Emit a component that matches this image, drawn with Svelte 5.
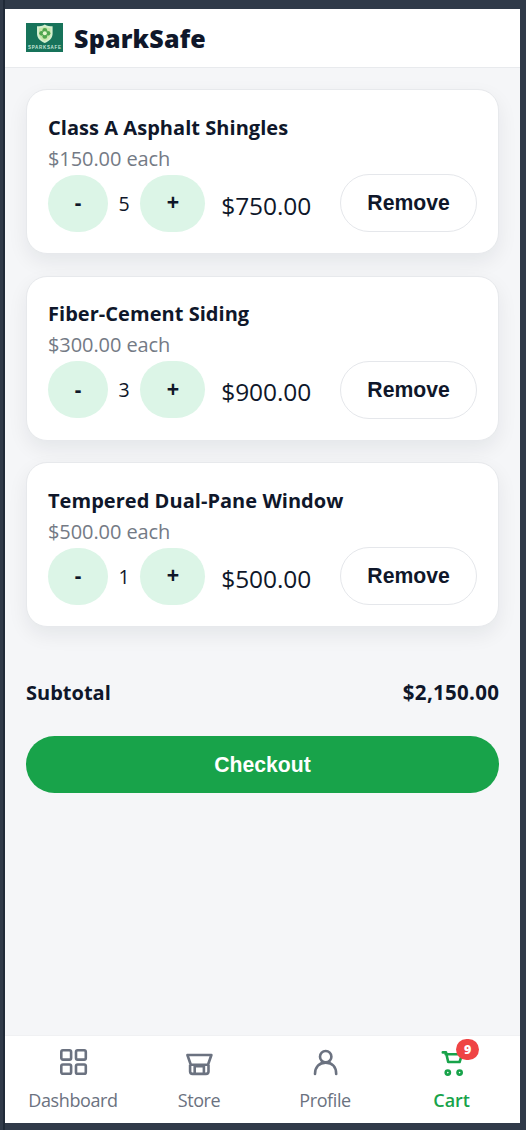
<script>
  const items = [
    { name: 'Class A Asphalt Shingles', price: '$150.00', qty: 5, total: '$750.00' },
    { name: 'Fiber-Cement Siding', price: '$300.00', qty: 3, total: '$900.00' },
    { name: 'Tempered Dual-Pane Window', price: '$500.00', qty: 1, total: '$500.00' }
  ];
</script>

<div class="frame">
  <div class="app">
    <header>
      <svg class="logo" width="37" height="29" viewBox="0 0 37 29">
        <rect width="37" height="29" fill="#17735a" />
        <path d="M18.8 1.4 C16.5 3 13.8 3.2 11 3.2 V10.5 C11 15 14 18 18.8 20 C23.6 18 26.6 15 26.6 10.5 V3.2 C23.8 3.2 21.1 3 18.8 1.4Z" fill="#d5f0cf" />
        <path d="M18.8 3.5 C17 4.5 15 5 13 5 V10.5 C13 14 15 16.4 18.8 18 C22.6 16.4 24.6 14 24.6 10.5 V5 C22.6 5 20.6 4.5 18.8 3.5Z" fill="#c8e8ad" />
        <g fill="#4fa64f"><circle cx="18.8" cy="7.3" r="2.4" /><circle cx="15.6" cy="10.3" r="2.4" /><circle cx="22" cy="10.3" r="2.4" /><circle cx="18.8" cy="13.4" r="2.4" /></g>
        <circle cx="18.8" cy="10.3" r="2" fill="#e5f6cf" />
        <text x="2" y="26.2" textLength="33" font-family="Liberation Sans" font-weight="700" font-size="4.5" fill="#c9e8da">SPARKSAFE</text>
      </svg>
      <span class="brand">SparkSafe</span>
    </header>

    <main>
      <div class="cards">
        {#each items as item}
          <article>
            <h2>{item.name}</h2>
            <p>{item.price} each</p>
            <div class="controls">
              <button class="step minus">-</button>
              <span class="qty">{item.qty}</span>
              <button class="step plus">+</button>
              <span class="total">{item.total}</span>
              <button class="remove">Remove</button>
            </div>
          </article>
        {/each}
      </div>
      <div class="subtotal"><span>Subtotal</span><span class="sum">$2,150.00</span></div>
      <button class="checkout">Checkout</button>
    </main>

    <nav>
      <div class="tab">
        <svg width="32" height="32" viewBox="0 0 32 32" fill="none" stroke="currentColor" stroke-width="2.6">
          <rect x="4.3" y="3.3" width="9.8" height="9.3" rx="1.6" /><rect x="19" y="3.3" width="9.8" height="9.3" rx="1.6" />
          <rect x="4.3" y="17.5" width="9.8" height="9.3" rx="1.6" /><rect x="19" y="17.5" width="9.8" height="9.3" rx="1.6" />
        </svg>
        <span>Dashboard</span>
      </div>
      <div class="tab">
        <svg width="32" height="32" viewBox="0 0 32 32" fill="none" stroke="currentColor" stroke-width="2.6" stroke-linejoin="round">
          <path d="M4.4 8 H28.4 L25 17.8 H7.8Z" /><path d="M7.1 17.8 V24.6 Q7.1 26.9 9.6 26.9 H23 Q25.5 26.9 25.5 24.6 V17.8" /><path d="M11.7 26.9 V19.2 H20.9 V26.9" />
        </svg>
        <span>Store</span>
      </div>
      <div class="tab">
        <svg width="32" height="32" viewBox="0 0 32 32" fill="none" stroke="currentColor" stroke-width="2.6" stroke-linecap="round">
          <circle cx="16.7" cy="9.7" r="5.7" /><path d="M6 27 C6 20 10.3 15.6 16.7 15.6 S27.2 20 27.2 27" />
        </svg>
        <span>Profile</span>
      </div>
      <div class="tab active">
        <svg width="32" height="32" viewBox="0 0 32 32" fill="none" stroke="currentColor" stroke-width="2.6" stroke-linecap="round" stroke-linejoin="round">
          <path d="M6.8 5.4 H10 L12.2 15 H23.6 L26 7.3 H9.7" /><circle cx="11.8" cy="25.6" r="2.1" /><circle cx="23.6" cy="25.6" r="2.1" />
        </svg>
        <span>Cart</span>
        <b class="badge">9</b>
      </div>
    </nav>
  </div>
</div>

<style>
  :global(body) { margin: 0; background: #303a49; }
  .frame { box-sizing: border-box; width: 526px; height: 1130px; padding: 9px 6px 7px 5px; background: linear-gradient(90deg, #303a49 3px, #202a38 3px, #202a38 5px, #303a49 5px); font-family: 'Open Sans', sans-serif; color: #0f172a; overflow: hidden; }
  .app { height: 1114px; display: flex; flex-direction: column; background: #f5f6f8; }
  header { box-sizing: border-box; height: 59px; flex: none; display: flex; align-items: center; padding-left: 21px; background: #fff; border-bottom: 1px solid #e8eaed; }
  .logo { margin: -1px 11px 0 0; flex: none; }
  .brand { font-size: 25px; font-weight: 800; line-height: 30px; letter-spacing: .2px; white-space: nowrap; }
  main { flex: 1; padding: 21.4px 21px 0; }
  .cards { display: flex; flex-direction: column; gap: 21.5px; }
  article { box-sizing: border-box; height: 165px; padding: 22.6px 21px 0; background: #fff; border: 1px solid #e7e9ec; border-radius: 21px; box-shadow: 0 8px 20px rgba(15, 23, 42, .07); }
  h2, p { margin: 0; white-space: nowrap; }
  h2 { font-size: 20px; font-weight: 700; line-height: 30px; letter-spacing: .04px; }
  p { font-size: 20px; line-height: 32px; letter-spacing: -.08px; color: #747a85; }
  .controls { display: flex; height: 57px; align-items: center; }
  button { box-sizing: border-box; border: 0; padding: 0; font: 700 21.2px/1 'Liberation Sans', sans-serif; color: #0f172a; }
  .step { height: 57px; border-radius: 29px; background: #dcf5e7; }
  .minus { width: 60px; }
  .plus { width: 65px; }
  .step, .remove { padding-bottom: 1px; }
  .qty { width: 32.5px; text-align: center; font-size: 19.5px; }
  .total { width: 119px; margin: 4px 0 0 16px; font-size: 24.5px; letter-spacing: -.1px; }
  .remove { width: 137px; height: 58px; border: 1px solid #e5e7eb; border-radius: 29px; background: #fff; }
  .subtotal { display: flex; justify-content: space-between; align-items: baseline; margin-top: 49.6px; font-size: 20px; line-height: 30px; font-weight: 700; }
  .sum { font-size: 20.5px; letter-spacing: .3px; margin-right: -.3px; }
  .checkout { display: block; width: 473px; height: 57px; margin-top: 28px; border-radius: 29px; background: #18a34a; color: #fff; }
  nav { box-sizing: border-box; height: 88px; flex: none; display: grid; grid-template-columns: repeat(4, 126px); padding: 11px 5px 0; background: #fff; border-top: 1px solid #f0f1f3; }
  .tab { position: relative; display: flex; flex-direction: column; align-items: center; color: #6b7280; font-size: 18px; line-height: 26px; letter-spacing: -.4px; }
  .tab svg { margin-bottom: 8px; }
  .active { color: #18a34a; font-weight: 600; letter-spacing: -.1px; padding-left: 1px; }
  .badge { position: absolute; left: 68px; top: -8px; width: 23px; height: 21px; border-radius: 11px; background: #ef4444; color: #fff; font-size: 12.5px; line-height: 21px; text-align: center; }
</style>
